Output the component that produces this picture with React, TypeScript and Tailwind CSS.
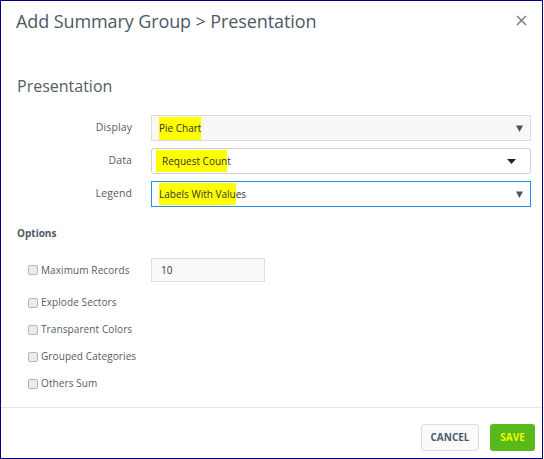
import React from 'react';

const font = { fontFamily: '"Open Sans", "DejaVu Sans", sans-serif' };

const Caret: React.FC<{ wide?: boolean }> = ({ wide }) =>
  wide ? (
    <svg width="9" height="5" viewBox="0 0 9 5" className="text-[#222]">
      <path d="M0 0h9L4.5 5z" fill="currentColor" />
    </svg>
  ) : (
    <svg width="7" height="7" viewBox="0 0 7 7" className="text-[#4b5561]">
      <path d="M0 0.5h7L3.5 7z" fill="currentColor" />
    </svg>
  );

const Hl: React.FC<{ children: React.ReactNode }> = ({ children }) => (
  <span className="bg-[#ffff00] py-[4px]">{children}</span>
);

const Row: React.FC<{ label: string; children: React.ReactNode }> = ({ label, children }) => (
  <div className="flex items-center h-[26px]">
    <div className="w-[115px] text-right text-[10.5px] tracking-[0.1px] text-[#555c66]">{label}</div>
    <div className="ml-[19px] flex-1 h-full">{children}</div>
  </div>
);

const Check: React.FC<{ label: string }> = ({ label }) => (
  <div className="flex items-center gap-[3px]">
    <span className="w-[10px] h-[10px] rounded-[2px] border border-[#b5b5b5] bg-[#ececec]" />
    <span className="text-[10px] tracking-[0.1px] text-[#555c66]">{label}</span>
  </div>
);

export default function App() {
  return (
    <div
      className="w-[543px] h-[459px] bg-white border border-[#000080] flex flex-col"
      style={font}
    >
      <div className="h-[39px] flex items-center justify-between pl-[15px] pr-[14px]">
        <h1 className="text-[18px] leading-[26px] text-[#4d5967] tracking-[-0.1px]">
          Add Summary Group &gt; Presentation
        </h1>
        <svg width="11" height="11" viewBox="0 0 11 11" className="text-[#6f7782] mr-[1px]">
          <path d="M1 1l9 9M10 1l-9 9" stroke="currentColor" strokeWidth="1.4" />
        </svg>
      </div>

      <div className="flex-1 pl-[16px] pr-[11px]">
        <h2 className="mt-[35px] text-[16px] leading-[22px] text-[#555c66]">Presentation</h2>

        <div className="mt-[18px] flex flex-col gap-[7px]">
          <Row label="Display">
            <div className="h-full border border-[#dcdcdc] bg-[#f8f8f8] flex items-center justify-between pl-[7px] pr-[7px] text-[10px] text-[#333]">
              <Hl>Pie Chart</Hl>
              <Caret />
            </div>
          </Row>
          <Row label="Data">
            <div className="h-full border border-[#cfcfcf] rounded-[3px] bg-white flex items-center justify-between pl-[4px] pr-[14px] text-[10px] text-[#333]">
              <span>
                <Hl>
                  <span className="pl-[6px]">Request Coun</span>
                </Hl>
                t
              </span>
              <Caret wide />
            </div>
          </Row>
          <Row label="Legend">
            <div className="h-full border border-[#1e90f0] bg-white flex items-center justify-between pl-[7px] pr-[7px] text-[10px] text-[#333]">
              <span>
                <Hl>Labels With Valu</Hl>es
              </span>
              <Caret />
            </div>
          </Row>
        </div>

        <h3 className="mt-[19px] text-[10px] leading-[14px] font-bold text-[#4d5967]">Options</h3>

        <div className="mt-[18px] pl-[11px]">
          <div className="flex items-center h-[24px]">
            <div className="w-[123px]">
              <Check label="Maximum Records" />
            </div>
            <div className="w-[114px] h-full border border-[#dedede] bg-[#fafafa] flex items-center pl-[9px] text-[10px] text-[#333]">
              10
            </div>
          </div>
          <div className="mt-[7px]">
            <div className="h-[27px] flex items-center">
              <Check label="Explode Sectors" />
            </div>
            <div className="h-[27px] flex items-center">
              <Check label="Transparent Colors" />
            </div>
            <div className="h-[27px] flex items-center">
              <Check label="Grouped Categories" />
            </div>
            <div className="h-[27px] flex items-center">
              <Check label="Others Sum" />
            </div>
          </div>
        </div>
      </div>

      <div className="h-[51px] border-t border-[#e6e6e6] flex items-start justify-end gap-[11px] pt-[16px] pr-[7px]">
        <button className="h-[27px] w-[58px] rounded-[3px] border border-[#dcdcdc] bg-[#fafafa] text-[10px] font-bold text-[#4d5967]">
          CANCEL
        </button>
        <button className="h-[27px] w-[45px] rounded-[3px] bg-[#57b91b] text-[10px] font-bold text-[#f2f700]">
          SAVE
        </button>
      </div>
    </div>
  );
}
